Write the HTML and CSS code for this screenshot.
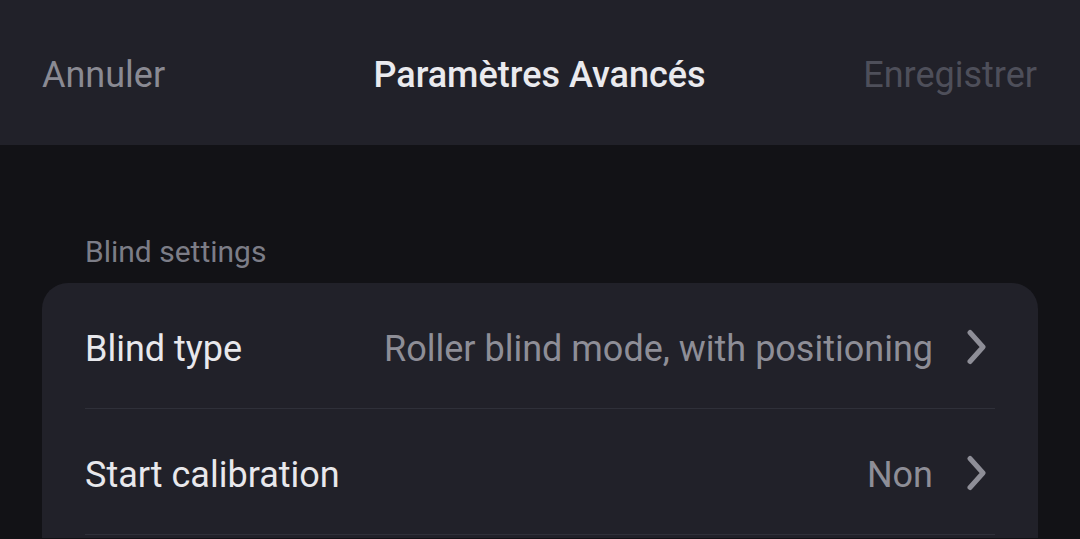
FILE: index.html
```html
<!DOCTYPE html>
<html lang="fr">
<head>
<meta charset="utf-8">
<link rel="stylesheet" href="styles.css">
</head>
<body>
<header class="topbar">
  <span class="btn cancel">Annuler</span>
  <span class="title">Paramètres Avancés</span>
  <span class="btn save">Enregistrer</span>
</header>
<main class="content">
  <div class="section-label">Blind settings</div>
  <section class="card">
    <div class="row">
      <span class="label">Blind type</span>
      <span class="value">Roller blind mode, with positioning</span>
      <svg class="chev" viewBox="0 0 24 36" width="24" height="36"><path d="M5 3.5 L18 18 L5 32.5" fill="none" stroke="#8e8e97" stroke-width="5" stroke-linecap="round" stroke-linejoin="round"/></svg>
    </div>
    <div class="row">
      <span class="label">Start calibration</span>
      <span class="value">Non</span>
      <svg class="chev" viewBox="0 0 24 36" width="24" height="36"><path d="M5 3.5 L18 18 L5 32.5" fill="none" stroke="#8e8e97" stroke-width="5" stroke-linecap="round" stroke-linejoin="round"/></svg>
    </div>
  </section>
</main>
</body>
</html>
```
FILE: styles.css
```css
html, body {
  margin: 0;
  padding: 0;
  background: #121216;
  font-family: Roboto, "Noto Sans", sans-serif;
  overflow: hidden;
}
.topbar {
  height: 145px;
  background: #212129;
  display: grid;
  grid-template-columns: 1fr auto 1fr;
  align-items: center;
  padding: 4px 43px 0 42px;
  box-sizing: border-box;
}
.btn {
  font-size: 36px;
  line-height: 1;
}
.cancel {
  color: #8a8a93;
  justify-self: start;
}
.save {
  color: #4e4f5a;
  justify-self: end;
}
.title {
  color: #eaeaee;
  font-size: 36px;
  font-weight: 500;
  line-height: 1;
}
.content {
  padding: 92px 42px 0;
}
.section-label {
  color: #7c7d87;
  font-size: 30px;
  padding-left: 43px;
  line-height: 1;
  height: 46px;
}
.card {
  background: #212129;
  border-radius: 26px 26px 0 0;
  padding: 0 43px 3px;
}
.row {
  height: 126px;
  display: flex;
  align-items: center;
  padding-top: 6px;
  border-bottom: 1.5px solid #2f3039;
  box-sizing: border-box;
}
.label {
  color: #e8e8ec;
  font-size: 36px;
  flex: 1;
}
.value {
  color: #8e8e97;
  font-size: 36px;
  margin-right: 32px;
}
.chev {
  margin-right: 6px;
  margin-top: -4px;
}
```
